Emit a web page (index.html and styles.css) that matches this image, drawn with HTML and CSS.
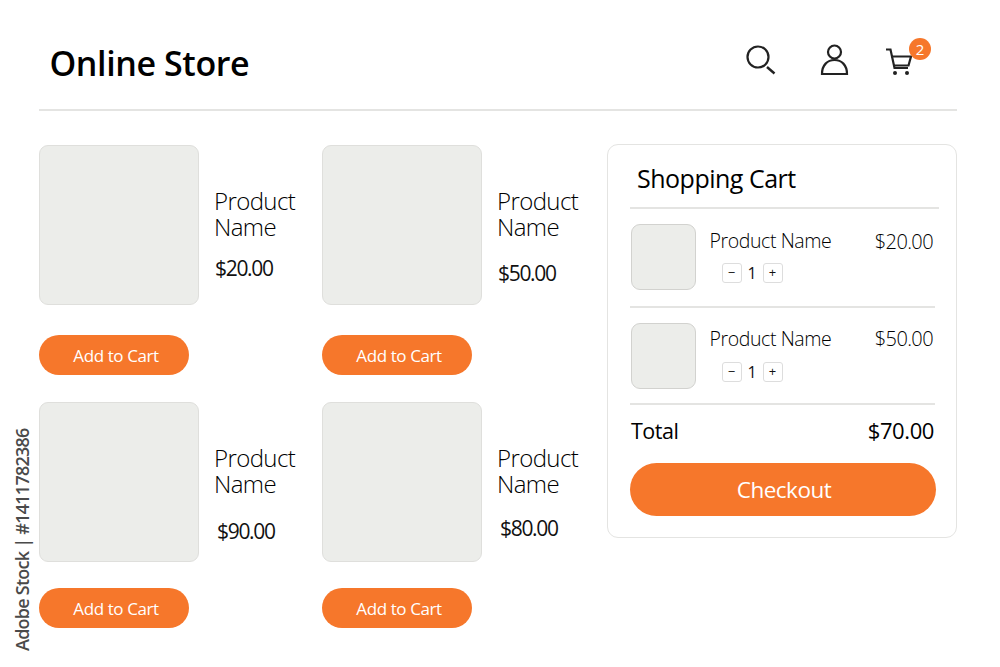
FILE: index.html
```html
<!DOCTYPE html>
<html lang="en">
<head>
<meta charset="utf-8">
<title>Online Store</title>
<link rel="stylesheet" href="styles.css">
</head>
<body>
<div class="page">
  <header class="header">
    <h1 class="logo">Online Store</h1>
    <nav class="icons">
      <svg class="icon icon-search" width="30" height="30" viewBox="0 0 30 30"><circle cx="12" cy="12" r="10.500"/><path d="M21 22l7.500 6.500" stroke-width="2.400"/></svg>
      <svg class="icon icon-user" width="29" height="32" viewBox="0 0 29 32"><circle cx="14.500" cy="8" r="6.500"/><path d="M2 30c0-9 5.500-14 12.500-14s12.500 5 12.500 14z"/></svg>
      <div class="cart-icon">
        <svg class="icon" width="28" height="28" viewBox="0 0 28 28"><path d="M1 1.500h4.500l4 18.500h13.500"/><path d="M6.500 8.500h19.500l-2.500 9H9"/><circle class="wheel" cx="10" cy="25" r="2"/><circle class="wheel" cx="22" cy="25" r="2"/></svg>
        <span class="badge">2</span>
      </div>
    </nav>
  </header>
  <main class="main">
    <section class="grid">
      <article class="product">
        <div class="product-top">
          <div class="thumb"></div>
          <div class="info">
            <h2 class="name">Product<br>Name</h2>
            <p class="price price-a">$20.00</p>
          </div>
        </div>
        <button class="add add-first">Add to Cart</button>
      </article>
      <article class="product">
        <div class="product-top">
          <div class="thumb"></div>
          <div class="info">
            <h2 class="name">Product<br>Name</h2>
            <p class="price price-b">$50.00</p>
          </div>
        </div>
        <button class="add add-first">Add to Cart</button>
      </article>
      <article class="product">
        <div class="product-top">
          <div class="thumb"></div>
          <div class="info">
            <h2 class="name">Product<br>Name</h2>
            <p class="price price-c">$90.00</p>
          </div>
        </div>
        <button class="add add-second">Add to Cart</button>
      </article>
      <article class="product">
        <div class="product-top">
          <div class="thumb"></div>
          <div class="info">
            <h2 class="name">Product<br>Name</h2>
            <p class="price price-d">$80.00</p>
          </div>
        </div>
        <button class="add add-second">Add to Cart</button>
      </article>
    </section>
    <aside class="cart">
      <h2 class="cart-title">Shopping Cart</h2>
      <div class="line line-first">
        <div class="line-thumb"></div>
        <div class="line-body">
          <div class="line-name">Product Name</div>
          <div class="qty"><span class="qty-btn">−</span><span class="qty-num">1</span><span class="qty-btn">+</span></div>
        </div>
        <div class="line-price">$20.00</div>
      </div>
      <div class="line line-second">
        <div class="line-thumb"></div>
        <div class="line-body">
          <div class="line-name">Product Name</div>
          <div class="qty"><span class="qty-btn">−</span><span class="qty-num">1</span><span class="qty-btn">+</span></div>
        </div>
        <div class="line-price">$50.00</div>
      </div>
      <div class="total"><span>Total</span><span class="total-price">$70.00</span></div>
      <button class="checkout">Checkout</button>
    </aside>
  </main>
  <div class="credit">Adobe Stock | #1411782386</div>
</div>
</body>
</html>
```
FILE: styles.css
```css
* { box-sizing: border-box; }
html, body { margin: 0; padding: 0; background: #fff; }
body { font-family: "Open Sans", "Liberation Sans", sans-serif; color: #111; overflow: hidden; }
.page { position: relative; width: 1000px; height: 667px; padding: 0 43px 0 39px; }

.header { height: 111px; border-bottom: 2px solid #e4e4e2; display: flex; align-items: flex-start; justify-content: space-between; padding-left: 10.500px; }
.logo { margin: 41px 0 0; font-size: 34px; line-height: 44px; font-weight: 600; letter-spacing: -0.4px; color: #000; }
.icons { display: flex; align-items: flex-start; gap: 36px; padding: 45px 44px 0 0; }
.icon { display: block; fill: none; stroke: #222; stroke-width: 2.200; }
.icon-search { margin-right: 8px; }
.icon-user { margin-top: -1px; }
.icon .wheel { fill: #222; stroke: none; }
.cart-icon { position: relative; margin-top: 3px; }
.badge { position: absolute; left: 24px; top: -10px; width: 22px; height: 22px; border-radius: 50%; background: #f6772b; color: #fff; font-size: 15px; line-height: 22px; text-align: center; }

.main { display: flex; align-items: flex-start; margin-top: 33px; }
.grid { width: 568px; display: grid; grid-template-columns: 283px 285px; }
.product { display: flex; flex-direction: column; align-items: flex-start; }
.product-top { display: flex; }
.thumb { width: 160px; height: 160px; background: #ecedea; border: 1px solid #dfdfdc; border-radius: 9px; margin-top: 1px; }
.info { padding: 44px 0 0 15px; }
.name { margin: 0; font-size: 24px; font-weight: 300; line-height: 26px; letter-spacing: -0.6px; color: #000; }
.price { margin: 0; font-size: 21px; line-height: 28px; font-weight: 400; letter-spacing: -1.300px; color: #111; }
.price-a { margin: 14px 0 0 1px; }
.price-b { margin: 19px 0 0 1px; }
.price-c { margin: 20px 0 0 3px; }
.price-d { margin: 17px 0 0 3px; }
.add { display: block; width: 150px; height: 40px; padding: 0 0 0 4px; border: 0; border-radius: 20px; background: #f6772b; color: #fff; font-family: inherit; font-size: 17px; font-weight: 400; letter-spacing: -0.4px; }
.add-first { margin-top: 30px; margin-bottom: 26px; }
.add-second { margin-top: 26px; }

.cart { width: 350px; height: 394px; border: 1.500px solid #e4e4e2; border-radius: 11px; padding: 0 17px 0 22px; background: #fff; }
.cart-title { margin: 0; height: 63.500px; padding: 15px 0 0 7px; border-bottom: 2px solid #e4e4e2; font-size: 25px; line-height: 36px; font-weight: 400; letter-spacing: -0.5px; color: #000; }
.line { display: flex; align-items: flex-start; height: 99px; margin-right: 4px; padding: 15px 2px 0 1px; border-bottom: 2px solid #e4e4e2; }
.line-second { height: 97px; }
.line-thumb { width: 65px; height: 66px; flex: none; background: #ecedea; border: 1px solid #d2d2cf; border-radius: 9px; }
.line-body { flex: 1; padding: 3px 0 0 13.500px; }
.line-first .line-body { padding-top: 4px; }
.line-name { font-size: 19.500px; line-height: 26px; font-weight: 300; letter-spacing: -0.4px; color: #000; }
.line-price { font-size: 20px; line-height: 26px; font-weight: 300; letter-spacing: -0.6px; padding-top: 3px; color: #000; }
.line-first .line-price { padding-top: 5px; }
.qty { display: flex; align-items: center; margin: 9px 0 0 12px; }
.line-second .qty { margin-top: 10px; }
.qty-btn { width: 20px; height: 20px; border: 1px solid #ddd; border-radius: 3px; font-size: 13px; line-height: 17px; text-align: center; background: #fff; color: #111; }
.qty-num { width: 21px; text-align: center; font-size: 16px; line-height: 20px; color: #111; }
.total { display: flex; justify-content: space-between; align-items: center; height: 55px; padding: 0 5px 4px 1px; font-size: 21.500px; font-weight: 400; letter-spacing: -0.5px; color: #000; }
.total-price { font-size: 22px; letter-spacing: -0.4px; }
.checkout { display: block; width: 306px; height: 53px; margin: 3px 0 0; padding: 0 0 0 2px; border: 0; border-radius: 27px; background: #f6772b; color: #fff; font-family: inherit; font-size: 22.500px; font-weight: 400; letter-spacing: -0.5px; }

.credit { position: absolute; left: 10px; top: 651px; transform-origin: 0 0; transform: rotate(-90deg); font-size: 18px; line-height: 24px; font-weight: 600; color: #4a4a4a; white-space: nowrap; letter-spacing: -0.75px; }
```
